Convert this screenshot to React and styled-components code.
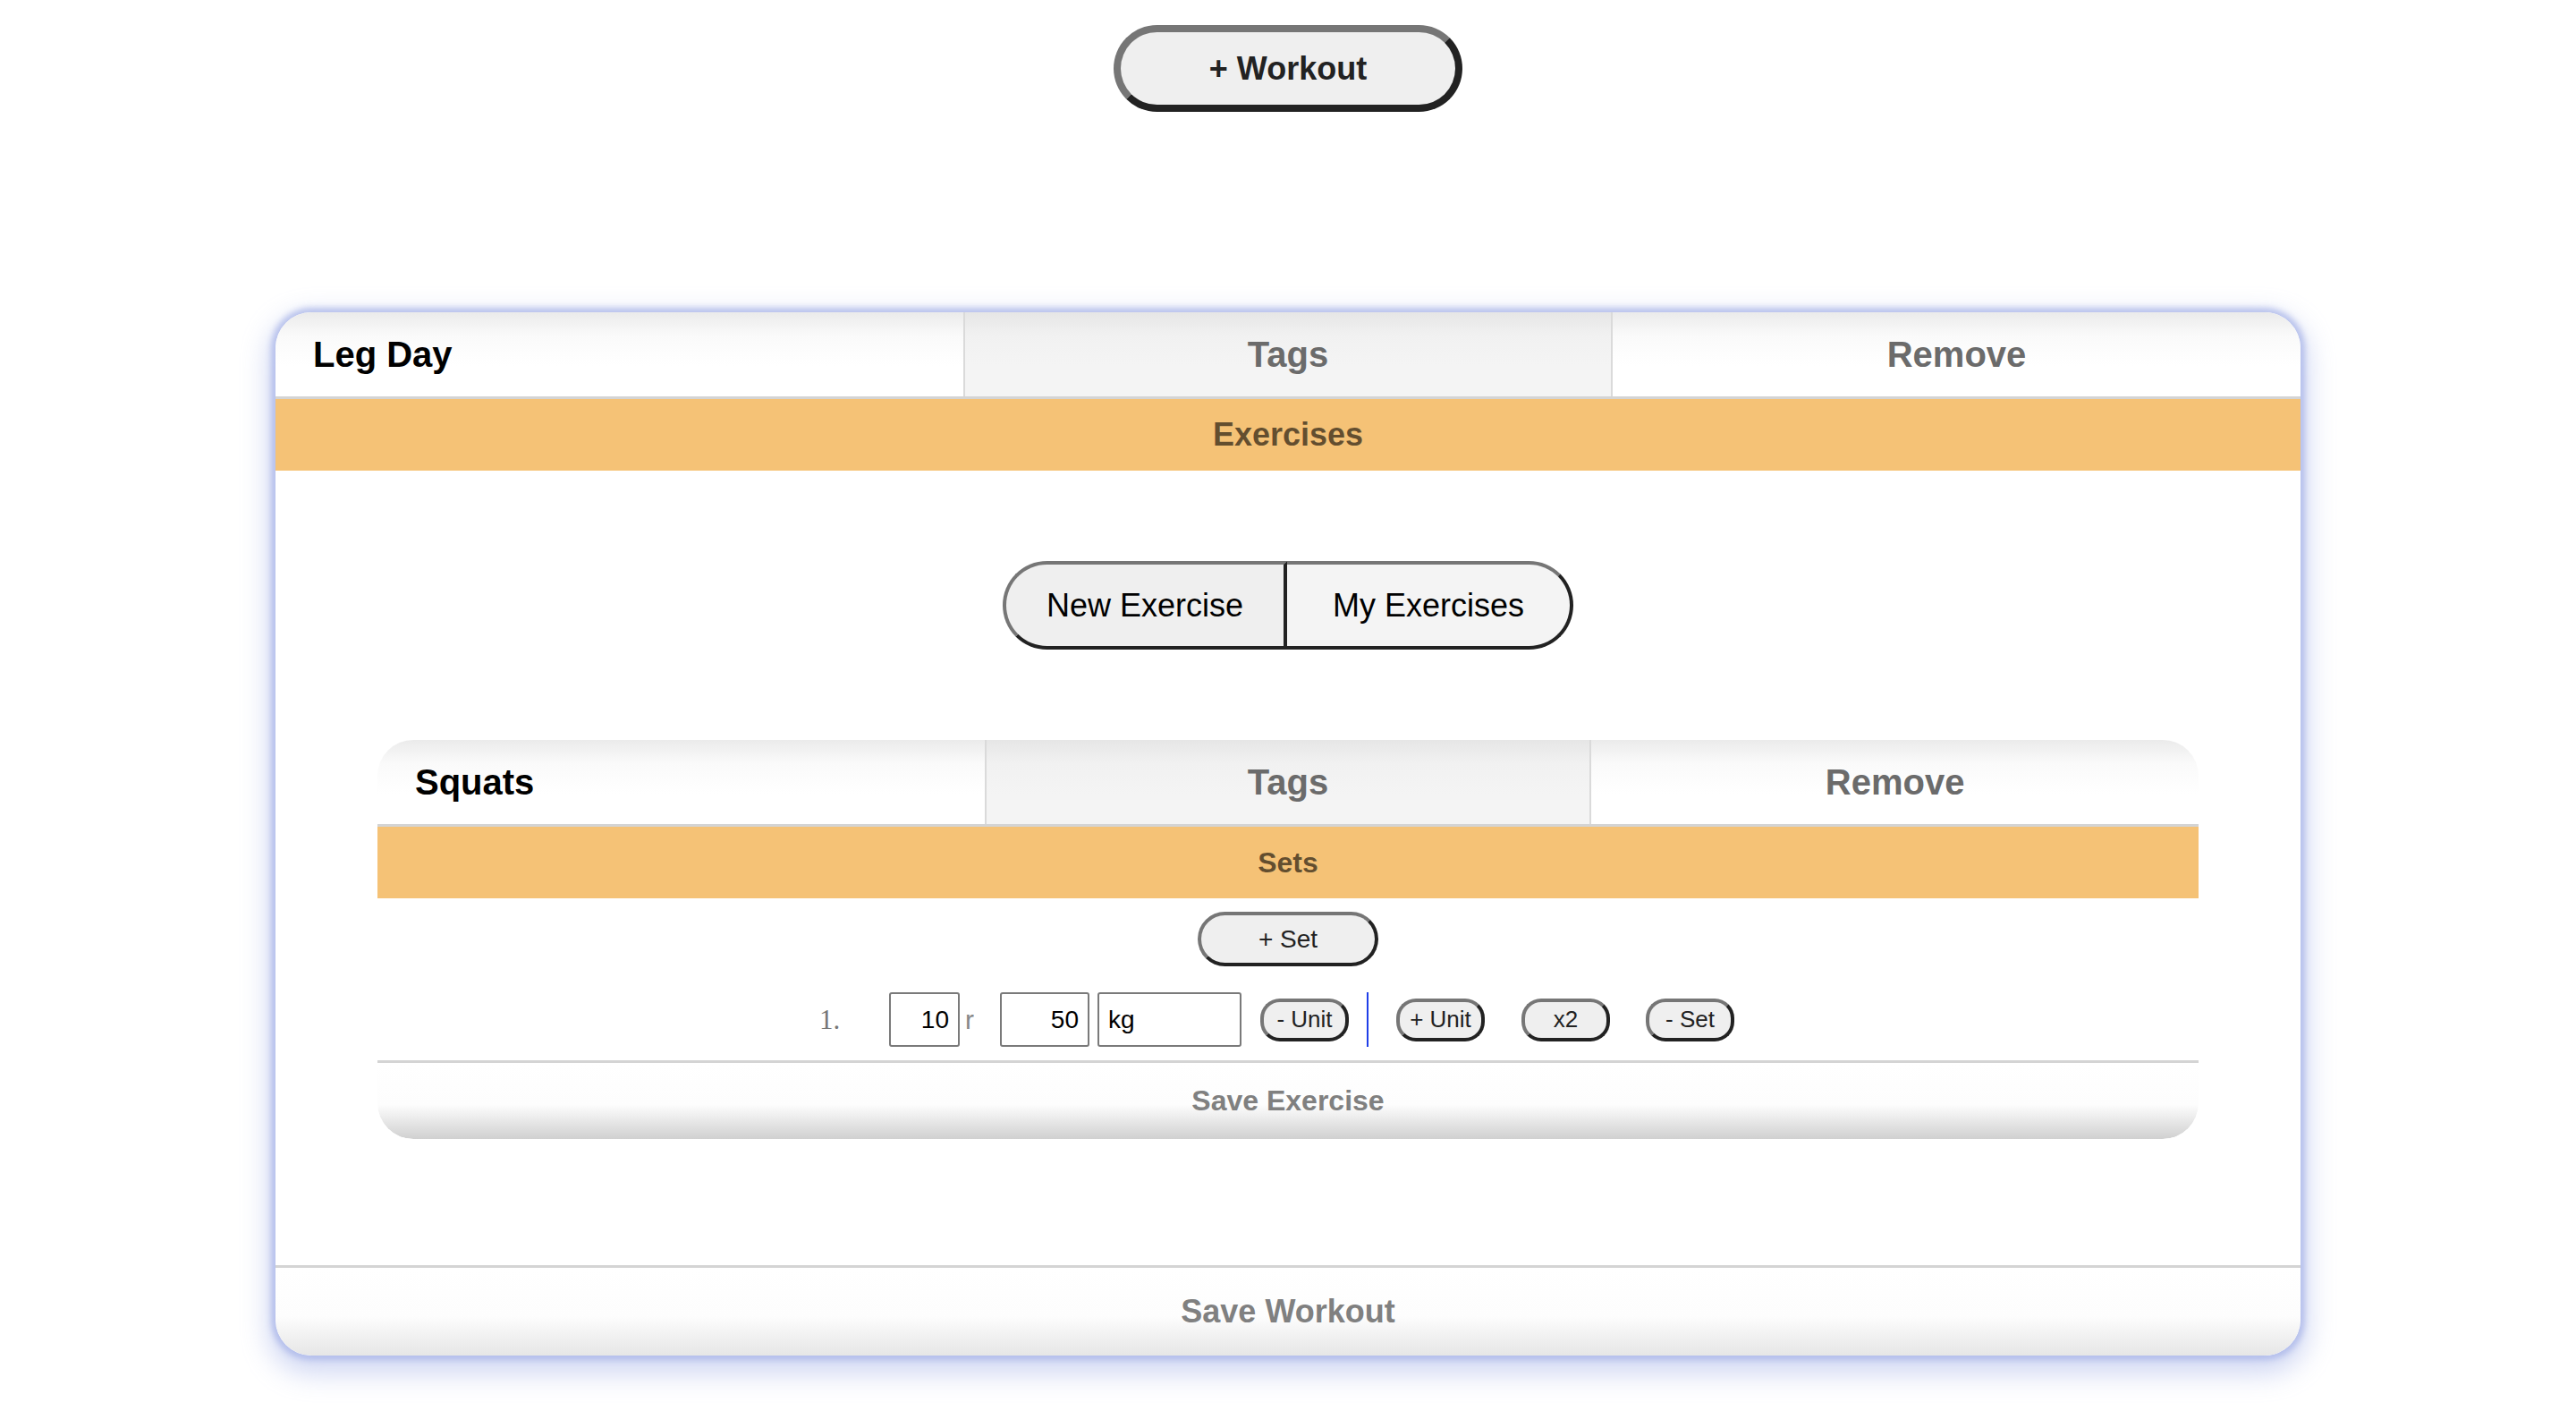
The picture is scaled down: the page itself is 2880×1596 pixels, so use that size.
import React from "react";
import styled, { createGlobalStyle } from "styled-components";

const GlobalStyle = createGlobalStyle`
  html, body {
    margin: 0;
    padding: 0;
    background: #ffffff;
    font-family: "Liberation Sans", Arial, Helvetica, sans-serif;
  }
  * { box-sizing: border-box; }
`;

const Page = styled.div`
  display: flex;
  flex-direction: column;
  align-items: center;
  padding: 28px 0 80px;
`;

const PillButton = styled.button`
  font-family: "Liberation Sans", Arial, sans-serif;
  background: ${(p) => p.$bg || "#efefef"};
  color: #222;
  border-style: solid;
  border-width: ${(p) => p.$border || 4}px;
  border-color: #767676 #222 #222 #767676;
  border-radius: ${(p) => p.$radius || 30}px;
  width: ${(p) => p.$w}px;
  height: ${(p) => p.$h}px;
  font-size: ${(p) => p.$size || 28}px;
  font-weight: ${(p) => (p.$bold ? 700 : 400)};
  margin-left: ${(p) => p.$ml || 0}px;
  padding: 0;
  display: flex;
  align-items: center;
  justify-content: center;
  flex-shrink: 0;
  cursor: pointer;
`;

const Card = styled.section`
  width: ${(p) => p.$w};
  margin-top: ${(p) => p.$mt || 0}px;
  background: #ffffff;
  border-radius: 40px;
  overflow: hidden;
  display: flex;
  flex-direction: column;
  box-shadow: ${(p) =>
    p.$glow
      ? "0 0 6px 5px rgba(170, 182, 232, 0.75), 0 12px 30px 8px rgba(150, 166, 228, 0.45)"
      : "none"};
`;

const HeaderRow = styled.div`
  display: grid;
  grid-template-columns: ${(p) => p.$cols};
  height: 97px;
  border-bottom: 3px solid #d4d4d4;
`;

const HeaderCell = styled.div`
  display: flex;
  align-items: center;
  justify-content: ${(p) => (p.$title ? "flex-start" : "center")};
  padding-left: ${(p) => (p.$title ? 42 : 0)}px;
  font-size: 40px;
  font-weight: 700;
  color: ${(p) => (p.$title ? "#000" : "#6b6b6b")};
  background: ${(p) =>
    p.$shaded
      ? "linear-gradient(to bottom, #e6e6e6 0px, #f1f1f1 26px, #f4f4f4 60px)"
      : "linear-gradient(to bottom, #ebebeb 0px, #fafafa 26px, #ffffff 60px)"};
  border-left: ${(p) => (p.$shaded ? "2px solid #dadada" : "none")};
  border-right: ${(p) => (p.$shaded ? "2px solid #dadada" : "none")};
`;

const SectionBar = styled.div`
  height: 80px;
  background: #f5c276;
  display: flex;
  align-items: center;
  justify-content: center;
  font-size: ${(p) => p.$size}px;
  font-weight: 700;
  color: rgba(0, 0, 0, 0.6);
`;

const CardBody = styled.div`
  display: flex;
  flex-direction: column;
  align-items: center;
  padding: 101px 114px 141px;
`;

const Segmented = styled.div`
  display: flex;
  height: 99px;
  margin-bottom: 101px;
`;

const SegButton = styled.button`
  font-family: "Liberation Sans", Arial, sans-serif;
  width: ${(p) => p.$w}px;
  height: 99px;
  font-size: 36px;
  color: #000;
  background: ${(p) => p.$bg};
  border-style: solid;
  border-width: 4px;
  border-color: #767676 #222 #222 #767676;
  border-left-width: ${(p) => (p.$side === "right" ? 0 : 4)}px;
  border-radius: ${(p) => (p.$side === "left" ? "50px 0 0 50px" : "0 50px 50px 0")};
  padding: 0;
  cursor: pointer;
`;

const SetsBody = styled.div`
  display: flex;
  flex-direction: column;
  align-items: center;
  padding: 15px 0 15px;
`;

const SetRow = styled.div`
  display: flex;
  align-items: center;
  justify-content: center;
  height: 61px;
  margin-top: 29px;
  padding-right: 25px;
  align-self: stretch;
`;

const Marker = styled.span`
  font-family: "Liberation Serif", "Times New Roman", serif;
  font-size: 31px;
  color: #777;
  width: 25px;
  margin-right: 53px;
`;

const NumInput = styled.input`
  font-family: "Liberation Sans", Arial, sans-serif;
  width: ${(p) => p.$w}px;
  height: 61px;
  margin-left: ${(p) => p.$ml || 0}px;
  border: 2px solid #7a7a7a;
  border-radius: 3px;
  font-size: 28px;
  color: #000;
  text-align: ${(p) => p.$align || "right"};
  padding: 0 10px;
  background: #fff;
  flex-shrink: 0;
  outline: none;
`;

const UnitLabel = styled.span`
  font-size: 30px;
  color: #888;
  margin: 0 29px 0 6px;
`;

const RowDivider = styled.span`
  width: 2px;
  height: 61px;
  background: #1f3fe8;
  margin-left: 20px;
  flex-shrink: 0;
`;

const SaveBar = styled.div`
  height: ${(p) => p.$h}px;
  border-top: 3px solid #d4d4d4;
  display: flex;
  align-items: center;
  justify-content: center;
  font-size: ${(p) => p.$size}px;
  font-weight: 700;
  color: #808080;
  background: ${(p) =>
    `linear-gradient(to bottom, #ffffff 0%, #fdfdfd 55%, ${p.$shade} 100%)`};
  border-radius: 0 0 40px 40px;
`;

export default function App() {
  return (
    <>
      <GlobalStyle />
      <Page>
        <PillButton $w={390} $h={97} $border={8} $radius={50} $size={36} $bold>
          + Workout
        </PillButton>

        <Card $w="2264px" $mt={224} $glow>
          <HeaderRow $cols="1fr 726px 1fr">
            <HeaderCell $title>Leg Day</HeaderCell>
            <HeaderCell $shaded>Tags</HeaderCell>
            <HeaderCell>Remove</HeaderCell>
          </HeaderRow>
          <SectionBar $size={36}>Exercises</SectionBar>

          <CardBody>
            <Segmented>
              <SegButton $w={318} $bg="#efefef" $side="left">
                New Exercise
              </SegButton>
              <SegButton $w={320} $bg="#f4f4f4" $side="right">
                My Exercises
              </SegButton>
            </Segmented>

            <Card $w="100%">
              <HeaderRow $cols="1fr 1fr 1fr">
                <HeaderCell $title>Squats</HeaderCell>
                <HeaderCell $shaded>Tags</HeaderCell>
                <HeaderCell>Remove</HeaderCell>
              </HeaderRow>
              <SectionBar $size={32}>Sets</SectionBar>

              <SetsBody>
                <PillButton $w={202} $h={61} $radius={31} $size={28}>
                  + Set
                </PillButton>
                <SetRow>
                  <Marker>1.</Marker>
                  <NumInput $w={79} value="10" readOnly />
                  <UnitLabel>r</UnitLabel>
                  <NumInput $w={100} value="50" readOnly />
                  <NumInput $w={161} $ml={9} $align="left" value="kg" readOnly />
                  <PillButton $w={99} $h={48} $radius={22} $size={26} $ml={21}>
                    - Unit
                  </PillButton>
                  <RowDivider />
                  <PillButton $w={99} $h={48} $radius={22} $size={26} $ml={31}>
                    + Unit
                  </PillButton>
                  <PillButton $w={99} $h={48} $radius={22} $size={26} $ml={41}>
                    x2
                  </PillButton>
                  <PillButton $w={99} $h={48} $radius={22} $size={26} $ml={40}>
                    - Set
                  </PillButton>
                </SetRow>
              </SetsBody>

              <SaveBar $h={88} $size={32} $shade="#d0d0d0">
                Save Exercise
              </SaveBar>
            </Card>
          </CardBody>

          <SaveBar $h={101} $size={36} $shade="#e6e6e6">
            Save Workout
          </SaveBar>
        </Card>
      </Page>
    </>
  );
}
